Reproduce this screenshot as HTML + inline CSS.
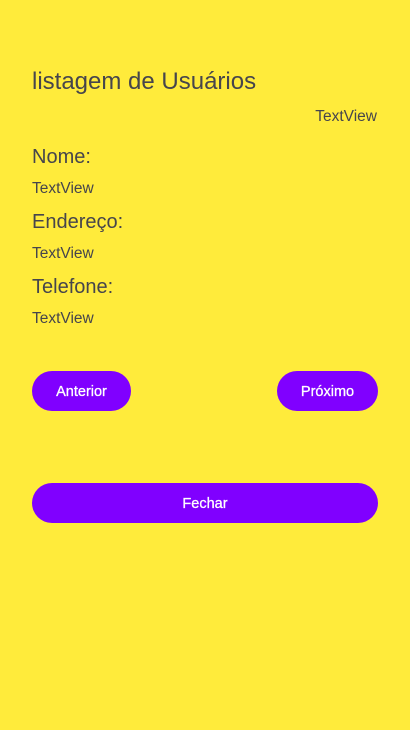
<!DOCTYPE html>
<html><head><meta charset="utf-8"><style>
html,body{margin:0;padding:0}
body{width:410px;height:730px;background:#FFEB3B;position:relative;overflow:hidden;font-family:"Liberation Sans",sans-serif;color:#46454c}
.t{position:absolute;line-height:1;white-space:nowrap}
.b{position:absolute;background:#8000FF;color:#fff;border-radius:20px;height:40px;line-height:42px;text-align:center;font-size:14.5px;font-weight:normal;-webkit-text-stroke:0.3px #fff}
</style></head><body>
<div class="t" style="left:32px;top:70px;font-size:24px">listagem de Usuários</div>
<div class="t" style="right:33px;top:109px;font-size:15.5px">TextView</div>
<div class="t" style="left:32px;top:147px;font-size:20px">Nome:</div>
<div class="t" style="left:32px;top:181px;font-size:15.5px">TextView</div>
<div class="t" style="left:32px;top:212px;font-size:20px">Endereço:</div>
<div class="t" style="left:32px;top:246px;font-size:15.5px">TextView</div>
<div class="t" style="left:32px;top:277px;font-size:20px">Telefone:</div>
<div class="t" style="left:32px;top:311px;font-size:15.5px">TextView</div>
<div class="b" style="left:32px;top:371px;width:99px">Anterior</div>
<div class="b" style="left:277px;top:371px;width:101px">Próximo</div>
<div class="b" style="left:32px;top:483px;width:346px">Fechar</div>
</body></html>
